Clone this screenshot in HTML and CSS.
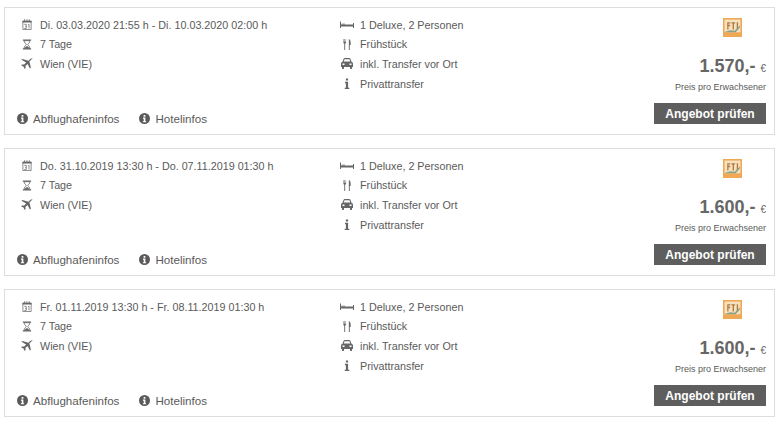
FILE: index.html
```html
<!DOCTYPE html>
<html lang="de">
  <head>
    <meta charset="UTF-8" />
    <title>Angebote</title>
    <link rel="stylesheet" href="styles.css">
  </head>
  <body>
    <svg class="sprite" width="0" height="0">
      <symbol id="i-cal" viewBox="0 0 12 12">
        <path d="M1.500 2.500h9v9h-9z" fill="none" stroke="currentColor" stroke-width=".8"/>
        <path d="M1 2h10v1.800H1zM3 .3h.9v2.700H3zM5.500 .3h.9v2.700h-.9zM8 .3h.9v2.700H8z" fill="currentColor"/>
        <path d="M3 5.800h2.200v4.500H3M4 8h1.200M7.200 6.300l1-.5v4.500" fill="none" stroke="currentColor" stroke-width=".8"/>
      </symbol>
      <symbol id="i-glass" viewBox="0 0 12 12">
        <path d="M1.500 .5h9v1.300h-9zM1.500 10.200h9v1.300h-9z" fill="currentColor"/>
        <path d="M2.800 1.800C2.800 4.500 5.200 5 5.200 6S2.800 7.500 2.800 10.200h6.400C9.200 7.500 6.800 7 6.800 6s2.400-1.500 2.400-4.200z" fill="none" stroke="currentColor" stroke-width=".9"/>
        <path d="M3.500 10.200C4 8.500 5.500 8 6 7.500c.5.500 2 1 2.500 2.700z" fill="currentColor"/>
      </symbol>
      <symbol id="i-plane" viewBox="0 0 14 12">
        <path d="M13.700.5C13 0 11.500.2 10.500 1.100L8.600 2.900 2 1 .9 2l5.200 3L3.900 7.200 1.600 7 .5 8l2.600 1.300L4.500 12l1-1.100-.2-2.300 2.300-2.100 2.600 5 1.100-1-1.700-6.700 2-2c1-1 1.500-1.800 1.100-2.300z" fill="currentColor"/>
      </symbol>
      <symbol id="i-bed" viewBox="0 0 14 8">
        <path d="M0 1h1v6.500H0zM13 2.500h1v5h-1zM1 4h12v2H1z" fill="currentColor"/>
        <path d="M1.500 3.200h3.500V4H1.500z" fill="currentColor"/>
      </symbol>
      <symbol id="i-food" viewBox="0 0 12 12">
        <path d="M2 0v3.500c0 1 .5 1.500 1 1.700V12h1V5.200c.5-.2 1-.7 1-1.700V0h-.5v3H3.800V0h-.6v3H2.500V0zM8 0c1.300.5 2 2 2 4v2.500H9V12H8z" fill="currentColor"/>
      </symbol>
      <symbol id="i-car" viewBox="0 0 13 11">
        <path d="M3 1C3.200.4 3.700 0 4.300 0h4.400c.6 0 1.100.4 1.300 1l1 2.700c.8.300 1.500 1 1.500 2V9h-1v1.500c0 .3-.2.500-.5.500h-1c-.3 0-.5-.2-.5-.5V9H3.500v1.500c0 .3-.2.500-.5.500H2c-.3 0-.5-.2-.5-.5V9h-1V5.700c0-1 .7-1.700 1.500-2zM3.300 3.500h6.400L9 1.300H4z" fill="currentColor" fill-rule="evenodd"/>
        <path d="M2 5.500h2V7H2zM9 5.500h2V7H9z" fill="#fff"/>
      </symbol>
      <symbol id="i-info" viewBox="0 0 12 12">
        <path d="M4.800 .5h2.400v2.200H4.800zM3.800 4.200h3.400v6.300h1.300V12h-5v-1.500h1.300v-4.800h-1z" fill="currentColor"/>
      </symbol>
      <symbol id="i-circle" viewBox="0 0 10 10">
        <path d="M5 0a5 5 0 1 0 0 10A5 5 0 0 0 5 0zM4.200 1.800h1.600v1.500H4.200zM3.600 4.200h2.200v3.200h.7v1H3.500v-1h.8V5.200h-.7z" fill="currentColor" fill-rule="evenodd"/>
      </symbol>
      <symbol id="i-logo" viewBox="0 0 18 18">
        <path d="M0 0h18v18H0z" fill="#f0a855"/>
        <path d="M1.500 1.500h15v12h-15z" fill="#f7e2c0"/>
        <path d="M4 4h3v1.200H5.200v1.300H6.800v1.200H5.200V11H4zM8 4h3.500v1.200h-1.100V11H9.100V5.200H8zM13 4h1.300v7H13z" fill="#b07a40"/>
        <path d="M2 13l5-1.500 4 .5 5-5v2l-4 4.500H2z" fill="#8ba08a"/>
      </symbol>
    </svg>

    <div class="offer">
      <div class="offer-main">
        <div class="details">
          <ul class="facts">
            <li><svg class="ico"><use href="#i-cal"/></svg>Di. 03.03.2020 21:55 h - Di. 10.03.2020 02:00 h</li>
            <li><svg class="ico"><use href="#i-glass"/></svg>7 Tage</li>
            <li><svg class="ico"><use href="#i-plane"/></svg>Wien (VIE)</li>
          </ul>
          <ul class="facts">
            <li><svg class="ico"><use href="#i-bed"/></svg>1 Deluxe, 2 Personen</li>
            <li><svg class="ico"><use href="#i-food"/></svg>Frühstück</li>
            <li><svg class="ico"><use href="#i-car"/></svg>inkl. Transfer vor Ort</li>
            <li><svg class="ico"><use href="#i-info"/></svg>Privattransfer</li>
          </ul>
        </div>
        <div class="links">
          <a class="info-link"><svg class="ico-c"><use href="#i-circle"/></svg>Abflughafeninfos</a>
          <a class="info-link"><svg class="ico-c"><use href="#i-circle"/></svg>Hotelinfos</a>
        </div>
      </div>
      <div class="offer-side">
        <svg class="logo"><use href="#i-logo"/></svg>
        <p class="price">1.570,- <span class="cur">€</span></p>
        <p class="per">Preis pro Erwachsener</p>
        <button class="btn">Angebot prüfen</button>
      </div>
    </div>

    <div class="offer">
      <div class="offer-main">
        <div class="details">
          <ul class="facts">
            <li><svg class="ico"><use href="#i-cal"/></svg>Do. 31.10.2019 13:30 h - Do. 07.11.2019 01:30 h</li>
            <li><svg class="ico"><use href="#i-glass"/></svg>7 Tage</li>
            <li><svg class="ico"><use href="#i-plane"/></svg>Wien (VIE)</li>
          </ul>
          <ul class="facts">
            <li><svg class="ico"><use href="#i-bed"/></svg>1 Deluxe, 2 Personen</li>
            <li><svg class="ico"><use href="#i-food"/></svg>Frühstück</li>
            <li><svg class="ico"><use href="#i-car"/></svg>inkl. Transfer vor Ort</li>
            <li><svg class="ico"><use href="#i-info"/></svg>Privattransfer</li>
          </ul>
        </div>
        <div class="links">
          <a class="info-link"><svg class="ico-c"><use href="#i-circle"/></svg>Abflughafeninfos</a>
          <a class="info-link"><svg class="ico-c"><use href="#i-circle"/></svg>Hotelinfos</a>
        </div>
      </div>
      <div class="offer-side">
        <svg class="logo"><use href="#i-logo"/></svg>
        <p class="price">1.600,- <span class="cur">€</span></p>
        <p class="per">Preis pro Erwachsener</p>
        <button class="btn">Angebot prüfen</button>
      </div>
    </div>

    <div class="offer">
      <div class="offer-main">
        <div class="details">
          <ul class="facts">
            <li><svg class="ico"><use href="#i-cal"/></svg>Fr. 01.11.2019 13:30 h - Fr. 08.11.2019 01:30 h</li>
            <li><svg class="ico"><use href="#i-glass"/></svg>7 Tage</li>
            <li><svg class="ico"><use href="#i-plane"/></svg>Wien (VIE)</li>
          </ul>
          <ul class="facts">
            <li><svg class="ico"><use href="#i-bed"/></svg>1 Deluxe, 2 Personen</li>
            <li><svg class="ico"><use href="#i-food"/></svg>Frühstück</li>
            <li><svg class="ico"><use href="#i-car"/></svg>inkl. Transfer vor Ort</li>
            <li><svg class="ico"><use href="#i-info"/></svg>Privattransfer</li>
          </ul>
        </div>
        <div class="links">
          <a class="info-link"><svg class="ico-c"><use href="#i-circle"/></svg>Abflughafeninfos</a>
          <a class="info-link"><svg class="ico-c"><use href="#i-circle"/></svg>Hotelinfos</a>
        </div>
      </div>
      <div class="offer-side">
        <svg class="logo"><use href="#i-logo"/></svg>
        <p class="price">1.600,- <span class="cur">€</span></p>
        <p class="per">Preis pro Erwachsener</p>
        <button class="btn">Angebot prüfen</button>
      </div>
    </div>
  </body>
</html>
```

FILE: styles.css
```css
body {
  font-family: "Liberation Sans", Arial, sans-serif;
  color: #5a5a5a;
  background-color: #ffffff;
  margin: 0;
  padding: 7px 8px 0 4px;
  overflow: hidden;
}
.sprite {
  display: block;
}
.offer {
  display: flex;
  justify-content: space-between;
  height: 128px;
  box-sizing: border-box;
  border: 1px solid #dddddd;
  margin-bottom: 13px;
}
.offer-main {
  display: flex;
  flex-direction: column;
  justify-content: space-between;
  padding: 7px 0 9px 12px;
}
.details {
  display: flex;
}
.facts {
  list-style: none;
  margin: 0;
  padding: 0;
  font-size: 10.75px;
  width: 320px;
}
.facts + .facts {
  width: auto;
}
.facts li {
  display: flex;
  align-items: center;
  height: 19.600px;
}
.ico {
  width: 14px;
  height: 11px;
  margin: 0 6px 0 3px;
  flex: none;
  color: #666666;
}
.links {
  display: flex;
  gap: 20px;
}
.info-link {
  display: flex;
  align-items: center;
  font-size: 11.6px;
}
.ico-c {
  width: 11px;
  height: 11px;
  margin-right: 5px;
}
.offer-side {
  display: flex;
  flex-direction: column;
  align-items: flex-end;
  padding: 10px 8px 10px 0;
}
.logo {
  width: 19px;
  height: 19px;
  margin-right: 24px;
}
.price {
  font-size: 18px;
  font-weight: bold;
  color: #666666;
  margin: 19px 0 0;
  line-height: 20px;
}
.cur {
  font-size: 10px;
  font-weight: normal;
}
.per {
  font-size: 9px;
  margin: 3px 0 0;
  line-height: 10px;
}
.btn {
  background-color: #5e5e5e;
  color: #ffffff;
  border: none;
  margin-top: auto;
  width: 112px;
  height: 21px;
  padding: 0;
  font-family: inherit;
  font-size: 12px;
  font-weight: bold;
}
```
